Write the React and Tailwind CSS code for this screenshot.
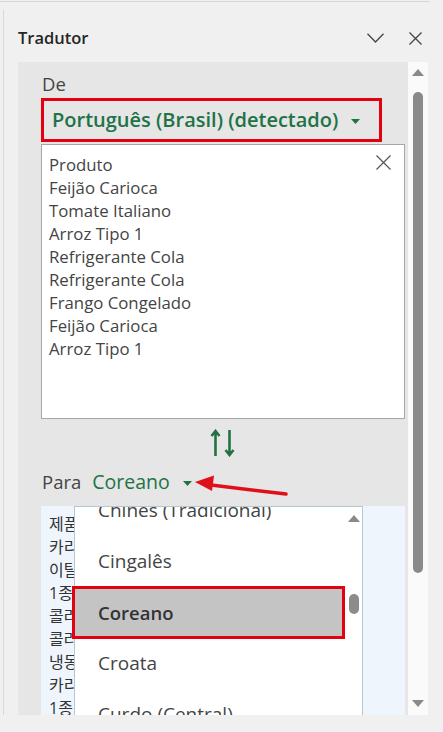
const sourceLines = [
  'Produto',
  'Feijão Carioca',
  'Tomate Italiano',
  'Arroz Tipo 1',
  'Refrigerante Cola',
  'Refrigerante Cola',
  'Frango Congelado',
  'Feijão Carioca',
  'Arroz Tipo 1',
];

const koreanLines = [
  '제품',
  '카리오카 콩',
  '이탈리아 토마토',
  '1종 쌀',
  '콜라 청량음료',
  '콜라 청량음료',
  '냉동 닭고기',
  '카리오카 콩',
  '1종 쌀',
];

const languages = ['Chinês (Tradicional)', 'Cingalês', 'Coreano', 'Croata', 'Curdo (Central)'];

// small filled triangle used by the language pickers
const Caret = ({ className }) => (
  <svg width="9" height="5" viewBox="0 0 9 5" className={className}>
    <path d="M0 0h9L4.5 5z" fill="#217346" />
  </svg>
);

const ScrollArrow = ({ up }) => (
  <svg width="12" height="7" viewBox="0 0 12 7">
    <path d={up ? 'M0 7L6 0l6 7z' : 'M0 0h12L6 7z'} fill="#8a8a8a" />
  </svg>
);

function App() {
  return (
    <div className="relative w-[443px] h-[732px] overflow-hidden bg-[#f0f0f0] font-['Open_Sans','Noto_Sans_CJK_KR',sans-serif]">
      <div className="mt-px h-px w-[430px] bg-[#d8d8d8]" />
      <div className="ml-[3px] mt-[8px] border-l border-[#d8d8d8] pl-[14px]">
        {/* Header */}
        <div className="flex h-[52px] items-center justify-between pt-[4px] pr-[21px]">
          <span className="text-[16.5px] font-semibold text-[#262626]">Tradutor</span>
          <div className="flex items-center gap-[25px]">
            <svg width="17" height="10" viewBox="0 0 17 10">
              <path d="M0.5 0.8L8.5 9L16.5 0.8" fill="none" stroke="#444" strokeWidth="1.3" />
            </svg>
            <svg width="13" height="13" viewBox="0 0 13 13">
              <path d="M0.5 0.5L12.5 12.5M12.5 0.5L0.5 12.5" fill="none" stroke="#444" strokeWidth="1.3" />
            </svg>
          </div>
        </div>

        <div className="flex h-[653px]">
          {/* Panel */}
          <div className="relative w-[390px] overflow-hidden bg-[#e6e6e6] pl-[23px] pr-[3px]">
            <div className="mt-[10px] h-[24px] pl-px text-[18.5px] leading-[24px] text-[#444]">De</div>
            <div className="mt-[2px] flex h-[44px] w-[341px] items-center border-[3px] border-[#e3000f] pl-[8px]">
              <span className="whitespace-nowrap text-[20px] font-semibold leading-[28px] text-[#217346]">Português (Brasil) (detectado)</span>
              <Caret className="ml-[13px] mt-[2px] shrink-0" />
            </div>
            <div className="relative mt-[2px] h-[275px] w-[364px] border border-[#a6a6a6] bg-white pl-[7px] pt-[8px]">
              {sourceLines.map((line, i) => (
                <div key={i} className="text-[16.8px] leading-[23px] text-[#444]">{line}</div>
              ))}
              <svg width="15" height="15" viewBox="0 0 15 15" className="absolute right-[13px] top-[10px]">
                <path d="M0.5 0.5L14.5 14.5M14.5 0.5L0.5 14.5" fill="none" stroke="#555" strokeWidth="1.2" />
              </svg>
            </div>

            {/* swap */}
            <div className="flex h-[48px] items-center justify-center">
              <svg width="26" height="28" viewBox="0 0 26 28">
                <path d="M5.5 27V2M1.5 7l4-5 4 5" fill="none" stroke="#217346" strokeWidth="2.6" />
                <path d="M19.5 1v25M15.5 21l4 5 4-5" fill="none" stroke="#217346" strokeWidth="2.6" />
              </svg>
            </div>

            <div className="flex h-[30px] items-center pl-px">
              <span className="text-[18.5px] text-[#444]">Para</span>
              <span className="ml-[11px] text-[19.5px] text-[#217346]">Coreano</span>
              <Caret className="ml-[13px] mt-[2px]" />
            </div>

            {/* target text with open language list */}
            <div className="relative mt-[9px] h-[230px] w-[364px] bg-[#eef5fd] pl-[8px] pt-[7px]">
              {koreanLines.map((line, i) => (
                <div key={i} className="whitespace-nowrap text-[16px] leading-[23px] text-[#333]">{line}</div>
              ))}

              <div className="absolute left-[33px] top-0 h-[260px] w-[289px] overflow-hidden border border-[#b3c9d1] bg-white">
                <div className="-mt-[22px]">
                  {languages.map((lang) => (
                    <div key={lang} className="relative flex h-[51px] items-center pl-[23px]">
                      {lang === 'Coreano' && (
                        <div className="absolute left-0 top-[2px] h-[47px] w-[267px] bg-[#c4c4c4]" />
                      )}
                      <span className={'relative whitespace-nowrap ' + (lang === 'Coreano' ? 'text-[18.5px] font-semibold text-[#333]' : 'text-[19px] text-[#444]')}>
                        {lang}
                      </span>
                    </div>
                  ))}
                </div>
                <div className="absolute left-[273px] top-[8px]">
                  <ScrollArrow up />
                </div>
                <div className="absolute left-[274px] top-[87px] h-[20px] w-[10px] rounded-full bg-[#8c8c8c]" />
              </div>

              <div className="absolute left-[31px] top-[80px] h-[53px] w-[273px] border-[3px] border-[#e3000f]" />
            </div>
          </div>

          {/* panel scrollbar */}
          <div className="flex w-[20px] flex-col items-center bg-[#fafafa] pb-[8px] pt-[7px]">
            <ScrollArrow up />
            <div className="mt-[16px] h-[481px] w-[10px] rounded-full bg-[#8a8a8a]" />
            <div className="mt-auto">
              <ScrollArrow />
            </div>
          </div>
        </div>
      </div>

      {/* annotation arrow */}
      <svg className="pointer-events-none absolute left-0 top-0" width="443" height="732">
        <path d="M207 484.5L286 494" stroke="#e0101a" strokeWidth="3.5" strokeLinecap="round" />
        <path d="M195 482L214 475.5L212 491z" fill="#e0101a" />
      </svg>
    </div>
  );
}

export default App;
